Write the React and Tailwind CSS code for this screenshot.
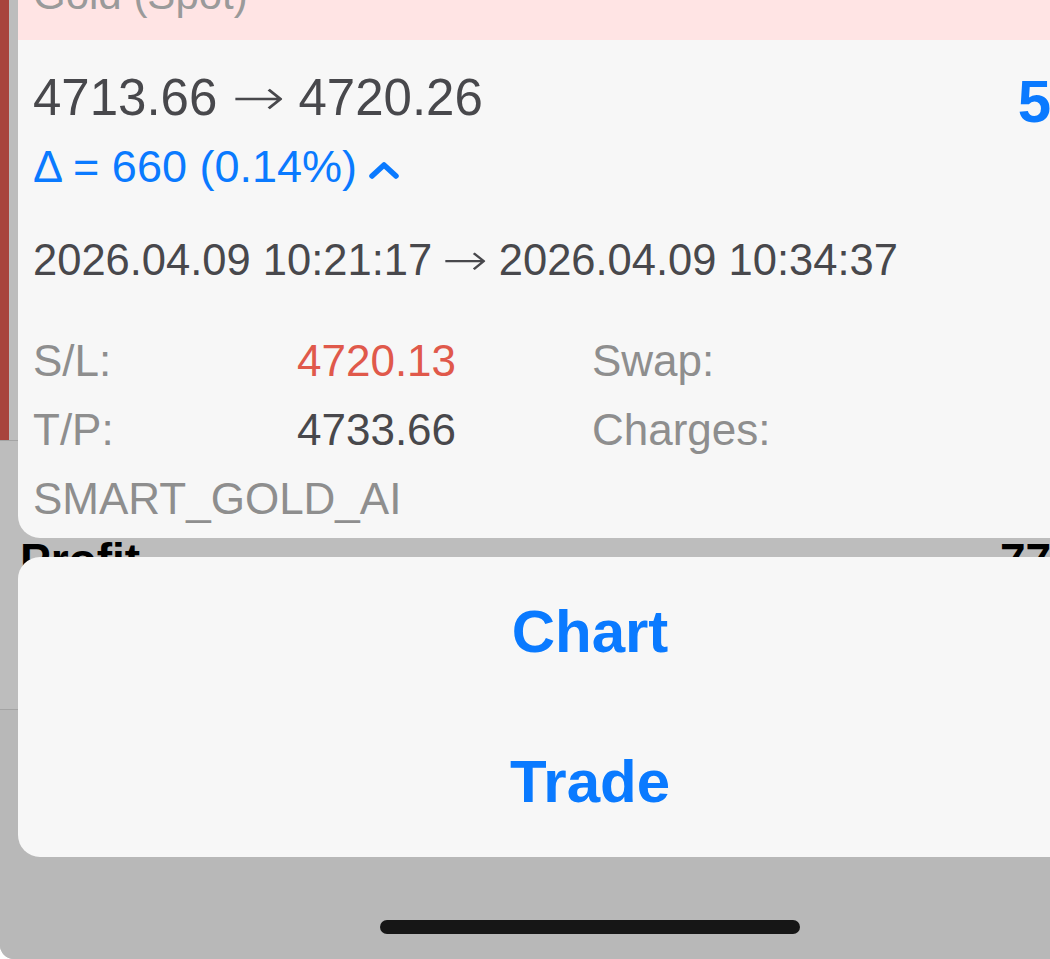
import React from 'react'

const font = { fontFamily: '"Liberation Sans", Arial, sans-serif' }

function Arrow({ className = 'mx-[5px]' }) {
  return (
    <span style={{ fontFamily: '"DejaVu Sans", sans-serif' }}
      className={`inline-block font-extralight scale-x-[1.25] ${className}`}>→</span>
  )
}

function ChevronUp() {
  return (
    <svg width="30" height="20" viewBox="0 0 30 20" className="inline-block ml-[12px] mt-[6px]">
      <polyline points="3,16 15,5 27,16" fill="none" stroke="#0a7aff" strokeWidth="5.5"
        strokeLinecap="round" strokeLinejoin="round" />
    </svg>
  )
}

export default function App() {
  return (
    <div className="bg-white">
      <div className="relative w-[1050px] h-[959px] overflow-hidden bg-[#bdbdbd] rounded-bl-[14px]" style={font}>
        {/* dimmed screen underneath */}
        <div className="flex flex-col h-full">
          <div className="h-[440px] flex">
            <div className="w-[9px] bg-[#a8443d]" />
          </div>
          <div className="h-px bg-[#a4a4a4]" />
          <div className="h-[268px] flex justify-between items-start px-[20px] pt-[96px]">
            <span className="text-[46px] leading-[46px] font-bold text-black">Profit</span>
            <span className="text-[46px] leading-[46px] font-bold text-black -mr-[85px]">77.00</span>
          </div>
          <div className="h-px bg-[#a4a4a4]" />
          <div className="flex-1 bg-[#b8b8b8]" />
        </div>

        {/* position details card */}
        <div className="absolute left-[18px] top-[-60px] w-[1183px] bg-[#f7f7f7] rounded-b-[22px] overflow-hidden">
          <div className="h-[100px] bg-[#ffe4e4] pl-[15px] pt-[34px]">
            <span className="text-[42px] leading-[42px] text-[#9a9a9a]">Gold (Spot)</span>
          </div>
          <div className="pl-[15px] pr-[33px] pt-[28px] pb-[5px]">
            <div className="flex justify-between items-start">
              <div className="text-[51px] leading-[60px] text-[#48484c]">4713.66 <Arrow /> 4720.26</div>
              <div className="mt-[4px] text-[60px] leading-[60px] font-bold text-[#0a7aff]">52.80</div>
            </div>
            <div className="text-[45px] leading-[70px] text-[#0a7aff] flex items-center">
              <span>Δ = 660 (0.14%)</span>
              <ChevronUp />
            </div>
            <div className="mt-[28px] text-[43.5px] leading-[60px] text-[#48484c]">
              2026.04.09 10:21:17 <Arrow className="mx-[3px]" /> 2026.04.09 10:34:37
            </div>
            <div className="mt-[36px] grid grid-cols-[264px_295px_1fr] text-[44px] leading-[69px]">
              <span className="text-[#8e8e8e]">S/L:</span>
              <span className="text-[#e0594b]">4720.13</span>
              <span className="text-[#8e8e8e]">Swap:</span>
              <span className="text-[#8e8e8e]">T/P:</span>
              <span className="text-[#48484c]">4733.66</span>
              <span className="text-[#8e8e8e]">Charges:</span>
              <span className="col-span-3 text-[#8e8e8e]">SMART_GOLD_AI</span>
            </div>
          </div>
        </div>

        {/* action sheet */}
        <div className="absolute left-[18px] top-[557px] w-[1144px] bg-[#f7f7f7] rounded-[22px] flex flex-col">
          <button className="h-[150px] flex items-center justify-center text-[60px] leading-[60px] font-bold text-[#0a7aff]">
            Chart
          </button>
          <button className="h-[150px] flex items-center justify-center text-[60px] leading-[60px] font-bold text-[#0a7aff]">
            Trade
          </button>
        </div>

        {/* home indicator */}
        <div className="absolute left-[380px] top-[920px] w-[420px] h-[14px] rounded-full bg-[#161616]" />
      </div>
    </div>
  )
}
